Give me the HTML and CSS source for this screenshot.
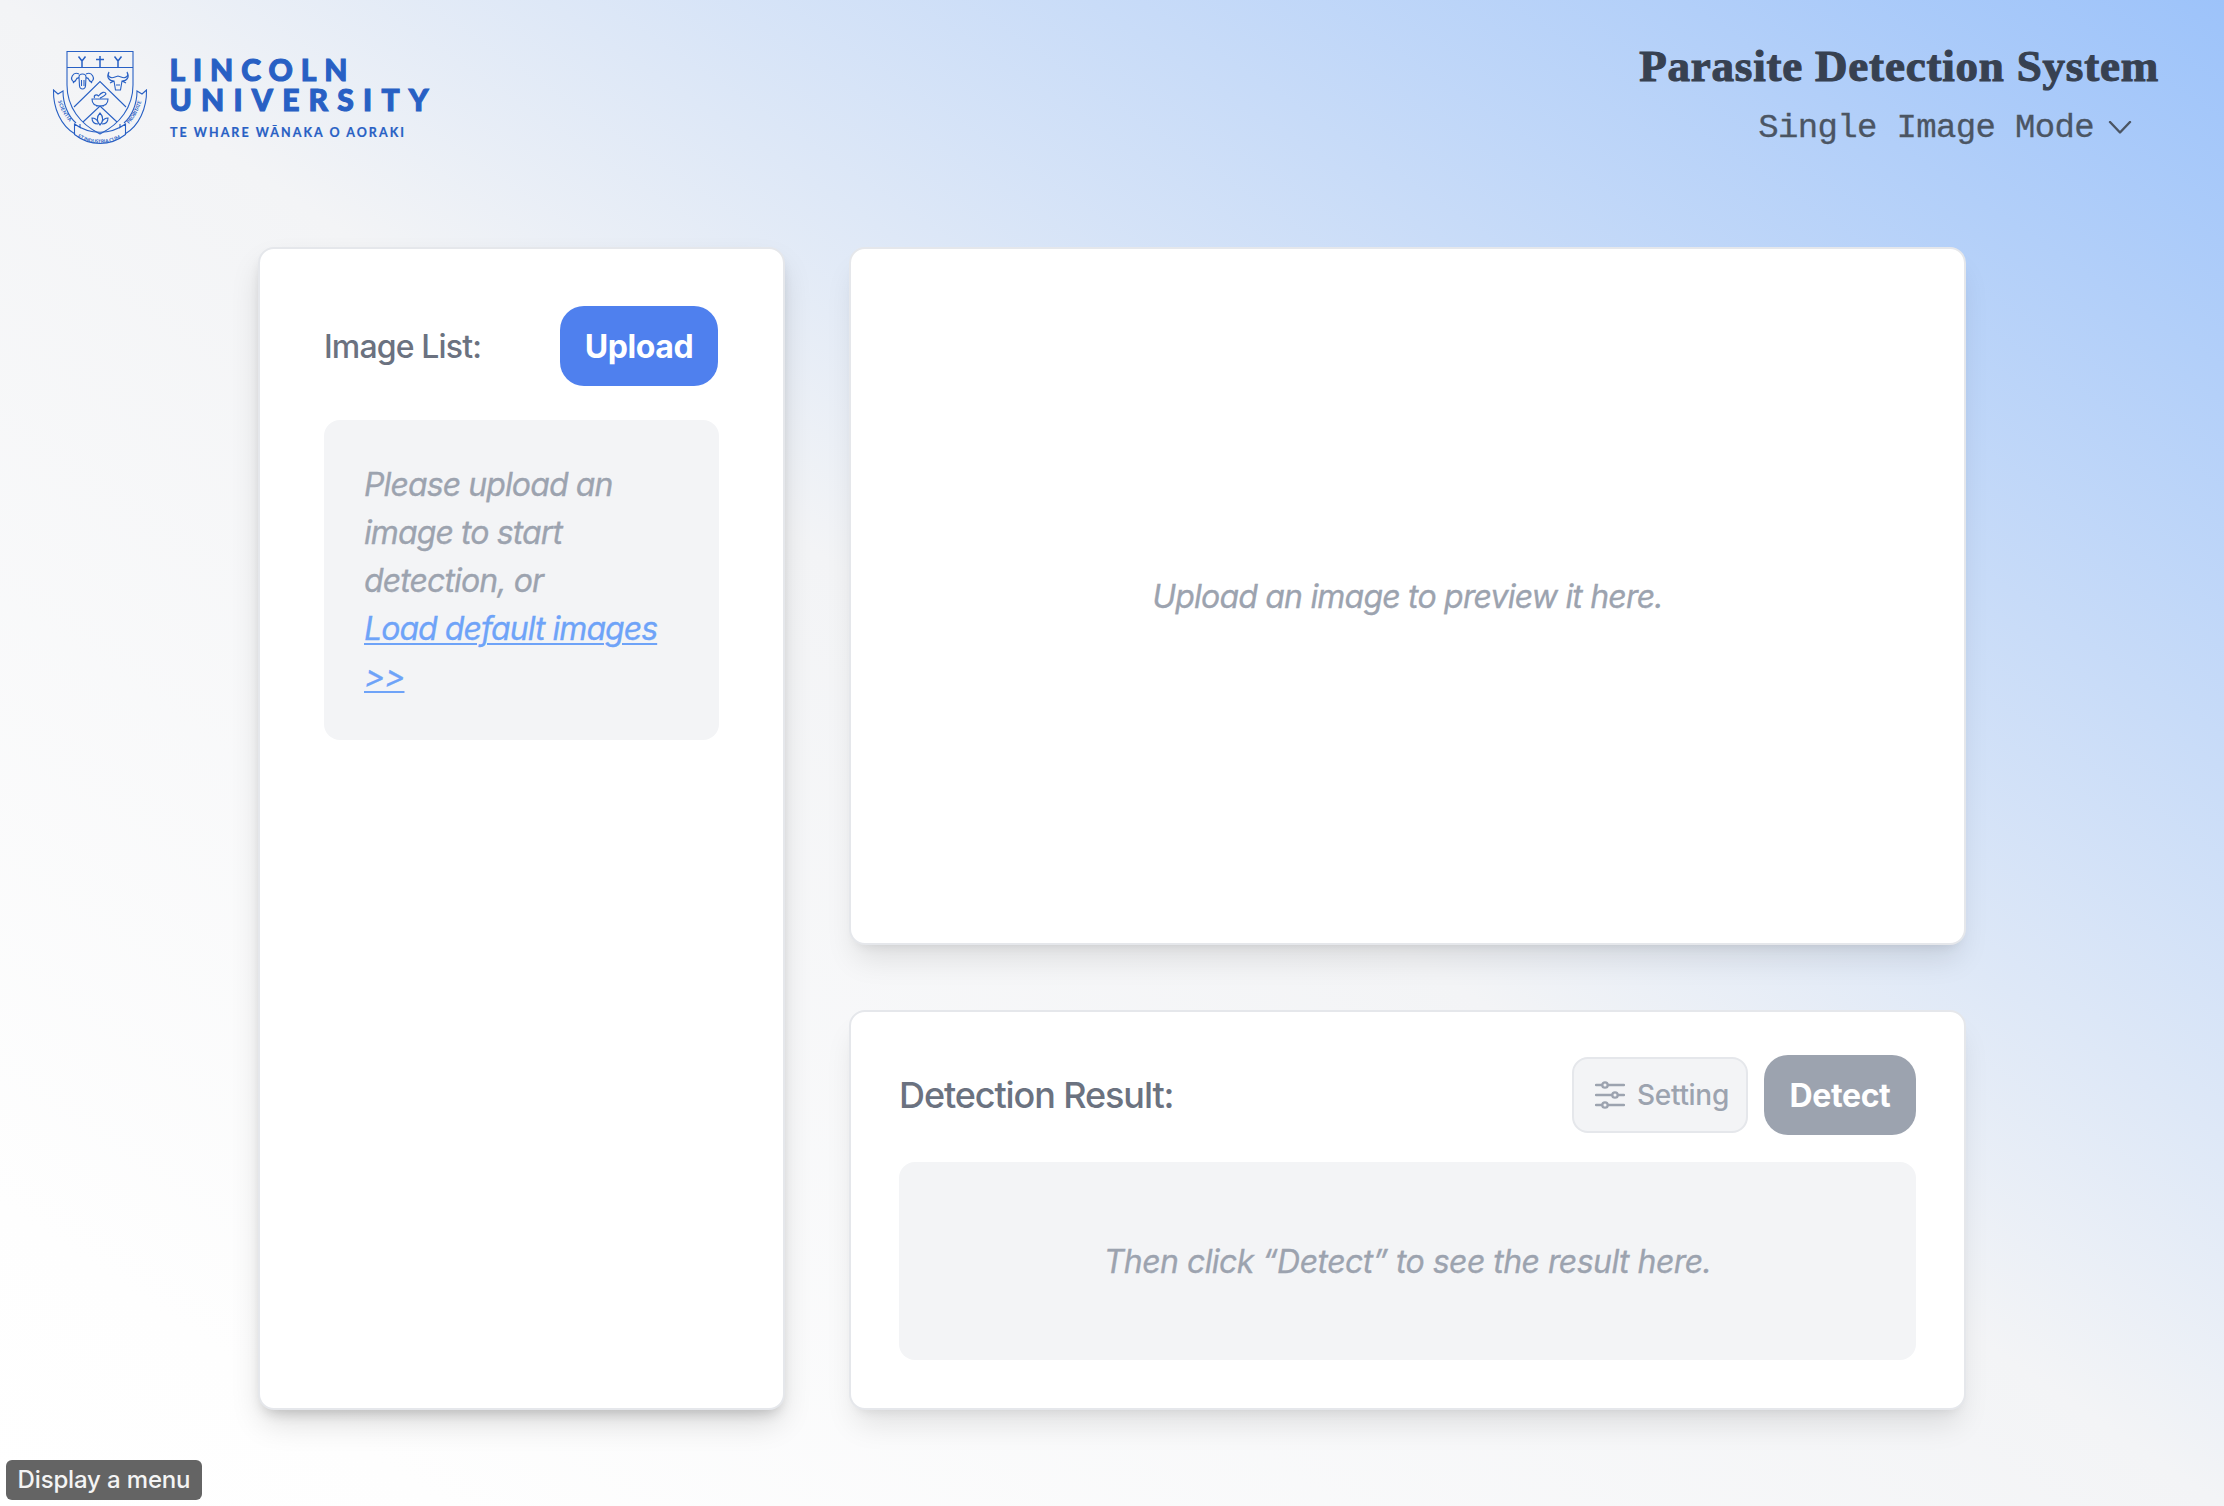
FILE: index.html
```html
<!DOCTYPE html>
<html lang="en">
<head>
<meta charset="utf-8">
<title>Parasite Detection System</title>
<link rel="stylesheet" href="styles.css">
</head>
<body>
<header class="header">
  <div class="brand">
    <svg class="crest" viewBox="0 0 120 115" fill="none" stroke="currentColor" stroke-width="1.1">
      <path d="M27 11.500H93V45C93 67 80 84 60 94C40 84 27 67 27 45ZM27 27.500H93"/>
      <path d="M34 67L60 41.500L86 67M43 82L60 66L77 82"/>
      <path stroke-width="1.500" d="M38.500 16.500L42 21L45.500 16.500M42 21V27M60 16V27M56 19.500H64M74.500 16.500L78 21L81.500 16.500M78 21V27"/>
      <path d="M39 37C39 33 46 33 46 37L45.500 46C45 50 40 50 39.500 46ZM39 34C33 31 29 39 34 42C37 42 35 37 39 38M46 34C52 31 56 39 51 42C48 42 50 37 46 38M36 40L33 43M49 40L52 43M41.500 40V46M44 40V46"/>
      <path d="M69 32C67 36 70 39 75 37L78 36L81 37C86 39 89 36 87 32C90 37 87 41 82 41L80.500 50H75.500L74 41C69 41 66 37 69 32M74 41L70 43M82 41L86 43M76 45H80"/>
      <path d="M52 59H68C68 64 65 66 60 66C55 66 52 64 52 59ZM54.500 58C53.500 55 56.500 54 58.500 56C61.500 52 65 51 66 54C65 56 62 57 60 58M56 66H64"/>
      <path d="M60 73C64 77 63 82 60 85C57 82 56 77 60 73ZM58 84C53 84 52 81 52 78C55 78 57 80 58 82M62 84C67 84 68 81 68 78C65 78 63 80 62 82"/>
      <path d="M35 94C21 86 13 68 13.500 50L18 54L23 51C23 64 28 76 36 83M85 94C99 86 107 68 106.500 50L102 54L97 51C97 64 92 76 84 83"/>
      <path d="M34.500 84C50 95 70 95 85.500 84V94.500C70 106.500 50 106.500 34.500 94.500ZM34.500 84L40 87.500V84M85.500 84L80 87.500V84"/>
      <path id="mottoLeft" stroke="none" d="M18 61C21 71 25 78 33 85"/>
      <path id="mottoBase" stroke="none" d="M37.500 97C52 105.500 68 105.500 83.500 96.500"/>
      <path id="mottoRight" stroke="none" d="M89 84C95 77 99 70 102 59"/>
      <g class="motto">
        <text><textPath href="#mottoLeft" textLength="24">SCIENTIA</textPath></text>
        <text><textPath href="#mottoBase" textLength="45">ET INDUSTRIA CUM</textPath></text>
        <text><textPath href="#mottoRight" textLength="26">PROBITATE</textPath></text>
      </g>
    </svg>
    <svg class="wordmark" viewBox="0 0 270 90" fill="currentColor">
      <text class="wordmark-main" x="-.5" y="24" textLength="178">LINCOLN</text>
      <text class="wordmark-main" x="-.5" y="54" textLength="259">UNIVERSITY</text>
      <text class="wordmark-sub" x="0" y="80" textLength="234">TE WHARE WĀNAKA O AORAKI</text>
    </svg>
  </div>
  <div class="heading">
    <h1 class="title">Parasite Detection System</h1>
    <div class="mode">Single Image Mode
      <svg class="chevron" viewBox="0 0 24 14" fill="none" stroke="currentColor" stroke-width="2.400" stroke-linecap="round" stroke-linejoin="round"><path d="M2 1L12 11.500L22 1"/></svg>
    </div>
  </div>
</header>
<main class="layout">
  <section class="card list">
    <div class="row">
      <span class="label">Image List:</span>
      <button class="btn upload">Upload</button>
    </div>
    <div class="hint">Please upload an image to start detection, or<br><a class="link">Load default images &gt;&gt;</a></div>
  </section>
  <div class="column">
    <section class="card preview">Upload an image to preview it here.</section>
    <section class="card result">
      <div class="row">
        <span class="result-label">Detection Result:</span>
        <div class="actions">
          <button class="setting">
            <svg class="sliders" viewBox="0 0 30 28" fill="none" stroke="currentColor" stroke-width="2.300" stroke-linecap="round"><path d="M1 4H7M13 4H29M1 14H17M23 14H29M1 24H7M13 24H29"/><circle cx="10" cy="4" r="2.700"/><circle cx="20" cy="14" r="2.700"/><circle cx="10" cy="24" r="2.700"/></svg>
            Setting
          </button>
          <button class="btn detect">Detect</button>
        </div>
      </div>
      <div class="result-box">Then click “Detect” to see the result here.</div>
    </section>
  </div>
</main>
<div class="status">Display a menu</div>
</body>
</html>
```
FILE: styles.css
```css
* { box-sizing: border-box; }
body {
  margin: 0;
  height: 1506px;
  overflow: hidden;
  font-family: Inter, "Liberation Sans", sans-serif;
  font-size: 32px;
  font-weight: 450;
  line-height: 48px;
  background: linear-gradient(to top right, #fff 0%, #fefefe 10%, #f3f4f6 50%, #9dc3fa 100%);
}
.header {
  height: 247px;
  display: flex;
  justify-content: space-between;
  align-items: flex-start;
  padding: 40px 65px 0 40px;
}
.brand { display: flex; color: #2860c4; }
.crest { width: 120px; height: 115px; }
.motto { fill: currentColor; stroke: none; font: 700 5px Lato, sans-serif; }
.wordmark { width: 270px; height: 90px; margin: 17px 0 0 10px; overflow: visible; }
.wordmark-main { font: 900 30px/1 Lato, sans-serif; stroke: currentColor; stroke-width: 1.1px; }
.wordmark-sub { font: 700 12.5px Lato, sans-serif; stroke: currentColor; stroke-width: .2px; }
.heading { display: flex; flex-direction: column; align-items: flex-end; }
.title {
  margin: 0;
  font: 700 45px/53px "Liberation Serif", serif;
  letter-spacing: .8px;
  -webkit-text-stroke: 1.1px #374151;
  color: #374151;
}
.mode {
  display: flex;
  align-items: center;
  gap: 14px;
  margin: 11px 27px 0 0;
  font: 34px/48px "Liberation Mono", monospace;
  letter-spacing: -.65px;
  -webkit-text-stroke: .3px #4b5563;
  color: #4b5563;
}
.chevron { width: 24px; height: 14px; }
.layout {
  display: grid;
  grid-template-columns: 527px 1117px;
  gap: 64px;
  height: 1163px;
  margin-left: 258px;
}
.column { display: grid; grid-template-rows: 698px 400px; gap: 65px; }
.card {
  background: #fff;
  border: 2px solid #e5e7eb;
  border-radius: 16px;
  box-shadow: 0 20px 30px -6px rgba(0,0,0,.1), 0 8px 12px -8px rgba(0,0,0,.1);
}
.list { padding: 57px 64px 0; box-shadow: 0 16px 32px -4px rgba(0,0,0,.14), 0 8px 14px -6px rgba(0,0,0,.2); }
.row { display: flex; align-items: center; justify-content: space-between; }
.label, .result-label { color: #6b7280; }
.label { padding-top: 2px; letter-spacing: -.85px; }
.result-label { font-size: 36px; letter-spacing: -1.1px; }
.btn {
  height: 80px;
  padding: 2px 0 0;
  border: 0;
  border-radius: 24px;
  color: #fff;
  font: 750 32px/48px Inter, sans-serif;
  letter-spacing: -.4px;
}
.upload { width: 158px; margin-right: 1px; background: #4f80ee; }
.detect { width: 152px; background: #9ca3af; }
.hint {
  height: 320px;
  margin-top: 34px;
  padding: 41px 40px 39px;
  border-radius: 16px;
  background: #f3f4f6;
  color: #9ca3af;
  font-style: italic;
  letter-spacing: -.9px;
  -webkit-text-stroke: .3px currentColor;
}
.link { color: #6ea3f8; letter-spacing: -.95px; text-decoration: underline; text-decoration-thickness: 2px; text-underline-offset: 3px; }
.preview, .result-box {
  display: flex;
  align-items: center;
  justify-content: center;
  padding-top: 2px;
  color: #9ca3af;
  font-style: italic;
  -webkit-text-stroke: .3px currentColor;
}
.preview { letter-spacing: -.8px; }
.result { padding: 43px 48px 0; }
.actions { display: flex; align-items: center; gap: 16px; }
.setting {
  display: flex;
  align-items: center;
  gap: 12px;
  width: 176px;
  height: 76px;
  padding: 0 0 0 21px;
  border: 2px solid #e5e7eb;
  border-radius: 16px;
  background: #f3f4f6;
  color: #9ca3af;
  font: 450 28px/40px Inter, sans-serif;
  letter-spacing: -.3px;
}
.sliders { width: 30px; height: 28px; }
.result-box { height: 198px; margin-top: 27px; border-radius: 16px; background: #f3f4f6; letter-spacing: -.55px; }
.status {
  position: absolute;
  left: 6px;
  bottom: 6px;
  width: 196px;
  height: 40px;
  border-radius: 6px;
  background: #646464;
  color: #f4f4f4;
  font-size: 24px;
  line-height: 39px;
  text-align: center;
  letter-spacing: -.15px;
}
```
